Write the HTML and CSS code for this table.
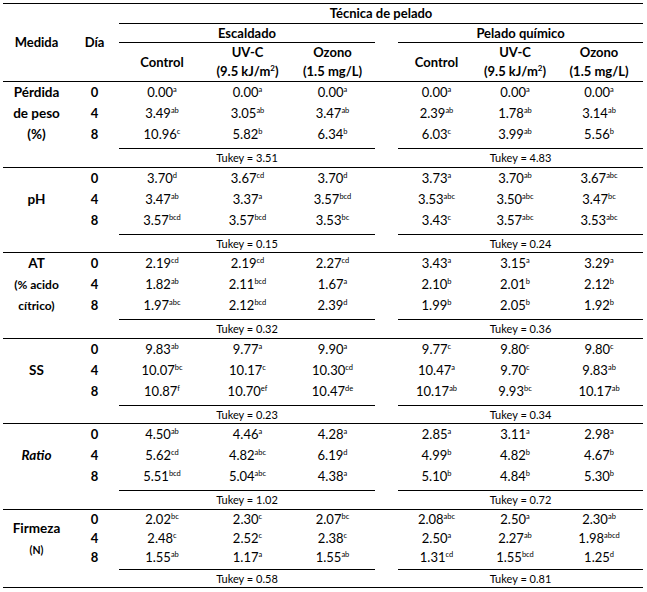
FILE: index.html
```html
<!DOCTYPE html>
<html lang="es">
<head>
<meta charset="utf-8">
<title>Técnica de pelado</title>
<link rel="stylesheet" href="styles.css">
</head>
<body>
<table class="tbl">
  <colgroup>
    <col class="c-med"><col class="c-dia"><col class="c-ec"><col class="c-eu"><col class="c-eo"><col class="c-gap"><col class="c-pc"><col class="c-pu"><col class="c-po">
  </colgroup>
  <thead>
    <tr class="h1">
      <th rowspan="3" class="hb">Medida</th>
      <th rowspan="3" class="hb">Día</th>
      <th colspan="7" class="line">Técnica de pelado</th>
    </tr>
    <tr class="h2">
      <th colspan="3" class="line">Escaldado</th>
      <th></th>
      <th colspan="3" class="line">Pelado químico</th>
    </tr>
    <tr class="h3">
      <th class="hb">Control</th>
      <th class="hb">UV-C<br>(9.5 kJ/m<sup>2</sup>)</th>
      <th class="hb">Ozono<br>(1.5 mg/L)</th>
      <th class="hb"></th>
      <th class="hb">Control</th>
      <th class="hb">UV-C<br>(9.5 kJ/m<sup>2</sup>)</th>
      <th class="hb">Ozono<br>(1.5 mg/L)</th>
    </tr>
  </thead>

  <tbody>
    <tr><td rowspan="3" class="med">Pérdida<br>de peso<br>(%)</td><td class="day">0</td><td>0.00<sup>a</sup></td><td>0.00<sup>a</sup></td><td>0.00<sup>a</sup></td><td></td><td>0.00<sup>a</sup></td><td>0.00<sup>a</sup></td><td>0.00<sup>a</sup></td></tr>
    <tr><td class="day">4</td><td>3.49<sup>ab</sup></td><td>3.05<sup>ab</sup></td><td>3.47<sup>ab</sup></td><td></td><td>2.39<sup>ab</sup></td><td>1.78<sup>ab</sup></td><td>3.14<sup>ab</sup></td></tr>
    <tr class="r8"><td class="day">8</td><td>10.96<sup>c</sup></td><td>5.82<sup>b</sup></td><td>6.34<sup>b</sup></td><td></td><td>6.03<sup>c</sup></td><td>3.99<sup>ab</sup></td><td>5.56<sup>b</sup></td></tr>
    <tr class="tk"><td colspan="2"></td><td colspan="3" class="tv">Tukey = 3.51</td><td></td><td colspan="3" class="tv">Tukey = 4.83</td></tr>
  </tbody>

  <tbody>
    <tr><td rowspan="3" class="med"><br>pH</td><td class="day">0</td><td>3.70<sup>d</sup></td><td>3.67<sup>cd</sup></td><td>3.70<sup>d</sup></td><td></td><td>3.73<sup>a</sup></td><td>3.70<sup>ab</sup></td><td>3.67<sup>abc</sup></td></tr>
    <tr><td class="day">4</td><td>3.47<sup>ab</sup></td><td>3.37<sup>a</sup></td><td>3.57<sup>bcd</sup></td><td></td><td>3.53<sup>abc</sup></td><td>3.50<sup>abc</sup></td><td>3.47<sup>bc</sup></td></tr>
    <tr class="r8"><td class="day">8</td><td>3.57<sup>bcd</sup></td><td>3.57<sup>bcd</sup></td><td>3.53<sup>bc</sup></td><td></td><td>3.43<sup>c</sup></td><td>3.57<sup>abc</sup></td><td>3.53<sup>abc</sup></td></tr>
    <tr class="tk"><td colspan="2"></td><td colspan="3" class="tv">Tukey = 0.15</td><td></td><td colspan="3" class="tv">Tukey = 0.24</td></tr>
  </tbody>

  <tbody>
    <tr><td rowspan="3" class="med">AT<br><span class="small">(% acido</span><br><span class="small">cítrico)</span></td><td class="day">0</td><td>2.19<sup>cd</sup></td><td>2.19<sup>cd</sup></td><td>2.27<sup>cd</sup></td><td></td><td>3.43<sup>a</sup></td><td>3.15<sup>a</sup></td><td>3.29<sup>a</sup></td></tr>
    <tr><td class="day">4</td><td>1.82<sup>ab</sup></td><td>2.11<sup>bcd</sup></td><td>1.67<sup>a</sup></td><td></td><td>2.10<sup>b</sup></td><td>2.01<sup>b</sup></td><td>2.12<sup>b</sup></td></tr>
    <tr class="r8"><td class="day">8</td><td>1.97<sup>abc</sup></td><td>2.12<sup>bcd</sup></td><td>2.39<sup>d</sup></td><td></td><td>1.99<sup>b</sup></td><td>2.05<sup>b</sup></td><td>1.92<sup>b</sup></td></tr>
    <tr class="tk"><td colspan="2"></td><td colspan="3" class="tv">Tukey = 0.32</td><td></td><td colspan="3" class="tv">Tukey = 0.36</td></tr>
  </tbody>

  <tbody>
    <tr><td rowspan="3" class="med"><br>SS</td><td class="day">0</td><td>9.83<sup>ab</sup></td><td>9.77<sup>a</sup></td><td>9.90<sup>a</sup></td><td></td><td>9.77<sup>c</sup></td><td>9.80<sup>c</sup></td><td>9.80<sup>c</sup></td></tr>
    <tr><td class="day">4</td><td>10.07<sup>bc</sup></td><td>10.17<sup>c</sup></td><td>10.30<sup>cd</sup></td><td></td><td>10.47<sup>a</sup></td><td>9.70<sup>c</sup></td><td>9.83<sup>ab</sup></td></tr>
    <tr class="r8"><td class="day">8</td><td>10.87<sup>f</sup></td><td>10.70<sup>ef</sup></td><td>10.47<sup>de</sup></td><td></td><td>10.17<sup>ab</sup></td><td>9.93<sup>bc</sup></td><td>10.17<sup>ab</sup></td></tr>
    <tr class="tk"><td colspan="2"></td><td colspan="3" class="tv">Tukey = 0.23</td><td></td><td colspan="3" class="tv">Tukey = 0.34</td></tr>
  </tbody>

  <tbody>
    <tr><td rowspan="3" class="med"><br><em>Ratio</em></td><td class="day">0</td><td>4.50<sup>ab</sup></td><td>4.46<sup>a</sup></td><td>4.28<sup>a</sup></td><td></td><td>2.85<sup>a</sup></td><td>3.11<sup>a</sup></td><td>2.98<sup>a</sup></td></tr>
    <tr><td class="day">4</td><td>5.62<sup>cd</sup></td><td>4.82<sup>abc</sup></td><td>6.19<sup>d</sup></td><td></td><td>4.99<sup>b</sup></td><td>4.82<sup>b</sup></td><td>4.67<sup>b</sup></td></tr>
    <tr class="r8"><td class="day">8</td><td>5.51<sup>bcd</sup></td><td>5.04<sup>abc</sup></td><td>4.38<sup>a</sup></td><td></td><td>5.10<sup>b</sup></td><td>4.84<sup>b</sup></td><td>5.30<sup>b</sup></td></tr>
    <tr class="tk"><td colspan="2"></td><td colspan="3" class="tv">Tukey = 1.02</td><td></td><td colspan="3" class="tv">Tukey = 0.72</td></tr>
  </tbody>

  <tbody class="tight">
    <tr><td rowspan="3" class="med firm">Firmeza<br><span class="tiny">(N)</span></td><td class="day">0</td><td>2.02<sup>bc</sup></td><td>2.30<sup>c</sup></td><td>2.07<sup>bc</sup></td><td></td><td>2.08<sup>abc</sup></td><td>2.50<sup>a</sup></td><td>2.30<sup>ab</sup></td></tr>
    <tr><td class="day">4</td><td>2.48<sup>c</sup></td><td>2.52<sup>c</sup></td><td>2.38<sup>c</sup></td><td></td><td>2.50<sup>a</sup></td><td>2.27<sup>ab</sup></td><td>1.98<sup>abcd</sup></td></tr>
    <tr class="r8"><td class="day">8</td><td>1.55<sup>ab</sup></td><td>1.17<sup>a</sup></td><td>1.55<sup>ab</sup></td><td></td><td>1.31<sup>cd</sup></td><td>1.55<sup>bcd</sup></td><td>1.25<sup>d</sup></td></tr>
    <tr class="tk last"><td colspan="2"></td><td colspan="3" class="tv">Tukey = 0.58</td><td></td><td colspan="3" class="tv">Tukey = 0.81</td></tr>
  </tbody>
</table>
</body>
</html>
```

FILE: styles.css
```css
html, body {
  margin: 0;
  padding: 0;
  background: #ffffff;
}

body {
  font-family: Lato, "Open Sans", sans-serif;
  color: #000;
}

.tbl {
  margin: 3px 0 0 3px;
  width: 640px;
  table-layout: fixed;
  border-collapse: separate;
  border-spacing: 0;
  border-top: 1px solid #000;
  font-size: 13px;
}

.c-med { width: 67px; }
.c-dia { width: 49px; }
.c-ec { width: 86px; }
.c-eu { width: 85px; }
.c-eo { width: 85px; }
.c-gap { width: 23px; }
.c-pc { width: 77px; }
.c-pu { width: 80px; }
.c-po { width: 88px; }

th, td {
  padding: 0;
  text-align: center;
  white-space: nowrap;
}

th {
  font-weight: 700;
  font-size: 13px;
  vertical-align: middle;
}

.h1 th { line-height: 19px; }
.h2 th { line-height: 18px; }
.h3 th { line-height: 19px; }

.line { border-bottom: 1px solid #000; }
.hb { border-bottom: 1px solid #000; }

th sup {
  font-size: 8px;
  line-height: 0;
  vertical-align: 5px;
}

td {
  line-height: 21px;
  vertical-align: top;
}

.r8 td { padding-bottom: 3px; }

.day { font-weight: 700; }

.med {
  font-weight: 700;
  font-size: 13.5px;
}

.med em { font-style: italic; }

.small { font-size: 12px; }
.tiny { font-size: 10.5px; }

td sup {
  font-size: 7.5px;
  line-height: 0;
  vertical-align: 5px;
}

.tk td {
  line-height: 17.5px;
  border-bottom: 1px solid #000;
  font-size: 11px;
  padding: 0;
}

.tk .tv { border-top: 1px solid #000; }

.tight td { line-height: 19px; }
.tight .r8 td { padding-bottom: 2px; }
.tight .firm { padding-top: 8px; line-height: 21px; }
.tight .tk td { line-height: 17.5px; }
```
